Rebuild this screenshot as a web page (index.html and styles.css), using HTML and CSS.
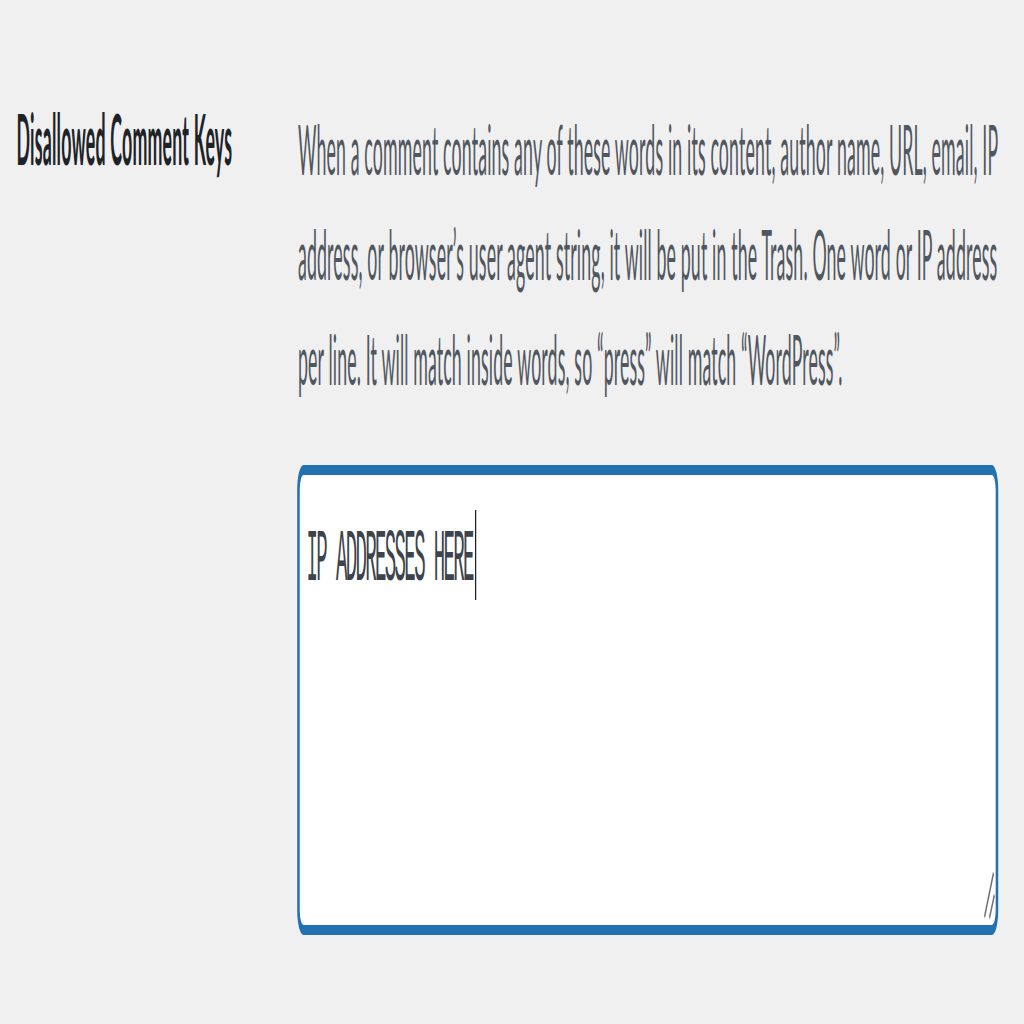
FILE: index.html
```html
<!DOCTYPE html>
<html lang="en-US">
<head>
	<meta charset="UTF-8">
	<title>Discussion Settings</title>
	<link rel="stylesheet" href="styles.css">
</head>
<body>
	<div class="page">
		<div class="form-row">
			<div class="row-label">Disallowed Comment Keys</div>
			<div class="row-field">
				<p class="field-desc">When a comment contains any of these words in its content, author name, URL, email, IP address, or browser&rsquo;s user agent string, it will be put in the Trash. One word or IP address per line. It will match inside words, so &ldquo;press&rdquo; will match &ldquo;WordPress&rdquo;.</p>
				<div class="keys-box">
					<span class="keys-text">IP ADDRESSES HERE</span><span class="caret"></span>
					<svg class="resizer" width="10" height="12" viewBox="0 0 10 12">
						<line x1="1.2" y1="9.4" x2="8.3" y2="0.6" />
						<line x1="5.1" y1="9.6" x2="9" y2="5" />
					</svg>
				</div>
			</div>
		</div>
	</div>
</body>
</html>
```

FILE: styles.css
```css
html, body
{
	margin: 0;
	padding: 0;
	background: #f0f0f1;
}

body
{
	min-height: 1024px;
	overflow: hidden;
}

/* the shot is stretched: narrow across, tall down */
.page
{
	width: 806px;
	height: 205px;
	padding-left: 13px;
	box-sizing: border-box;
	transform: scale(1.27, 5);
	transform-origin: 0 0;
	font-family: Lato, "Open Sans", sans-serif;
	font-size: 14px;
}

.form-row
{
	display: flex;
	align-items: flex-start;
	padding-top: 19px;
}

.row-label
{
	width: 221.6px;
	flex: none;
	font-weight: 700;
	line-height: 1.3;
	letter-spacing: 0.15px;
	color: #1d2327;
}

.row-field
{
	width: 552px;
}

.field-desc
{
	margin: 0 -6px 0 0;
	line-height: 21px;
	letter-spacing: 0.1px;
	color: #50575e;
}

.keys-box
{
	position: relative;
	margin: 12px 0 0 0.8px;
	width: 550px;
	height: 91.6px;
	box-sizing: border-box;
	padding: 6.6px 5px;
	background: #fff;
	border: 1px solid #2271b1;
	border-radius: 4px;
	box-shadow: 0 0 0 1px #2271b1;
	font-family: "Liberation Mono", "DejaVu Sans Mono", monospace;
	font-size: 15px;
	line-height: 22px;
	letter-spacing: -1.3px;
	color: #3c434a;
}

.caret
{
	display: inline-block;
	width: 0;
	height: 18px;
	margin-left: 1.3px;
	vertical-align: top;
	border-left: 1px solid #1d2327;
}

.resizer
{
	position: absolute;
	right: 0;
	bottom: -1px;
	stroke: #6e6e6e;
	stroke-width: 0.9;
}
```
